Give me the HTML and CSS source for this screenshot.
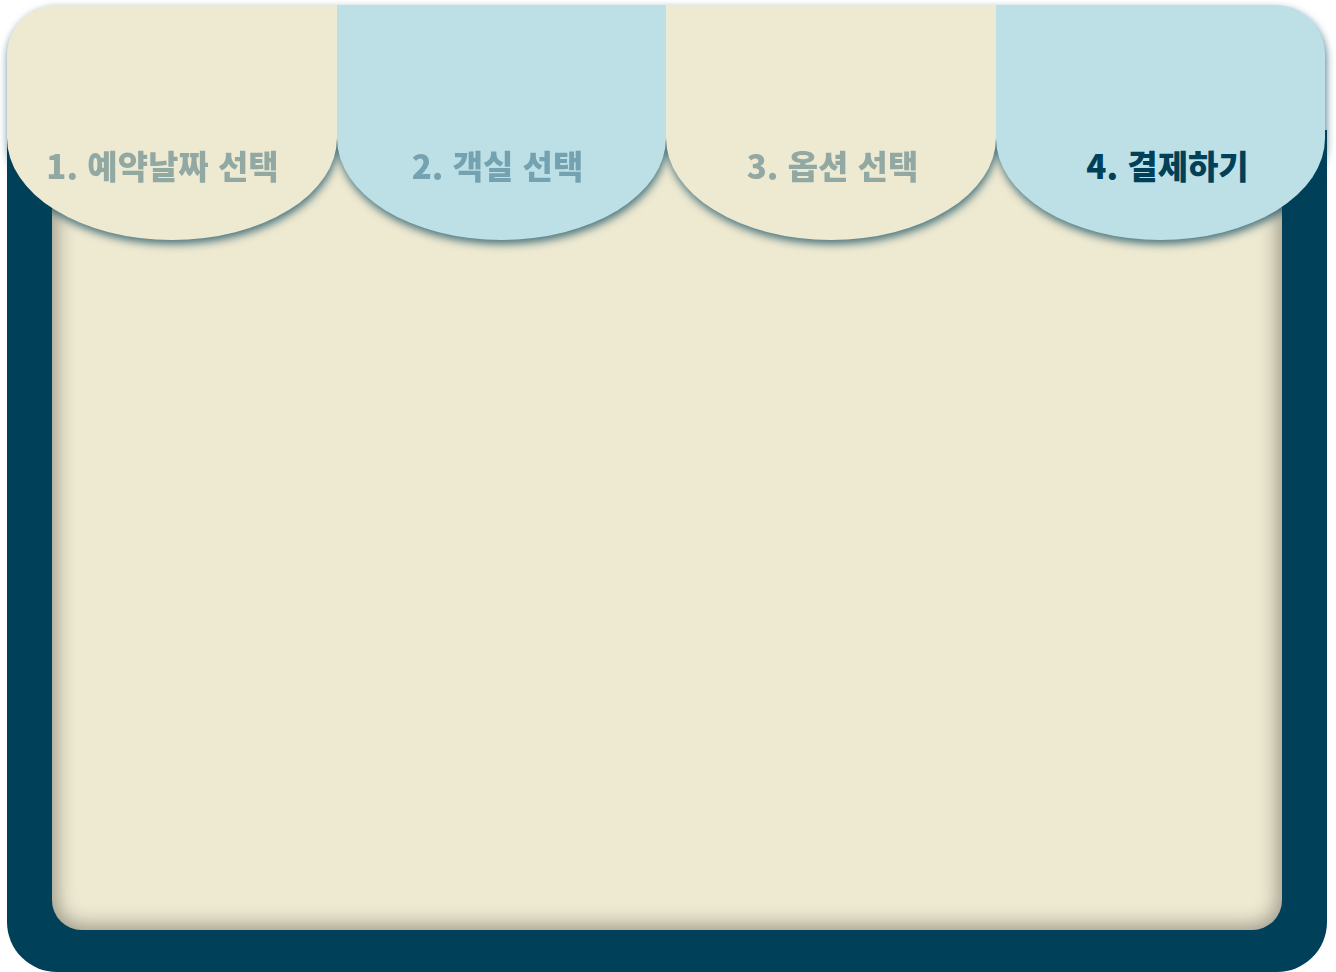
FILE: index.html
```html
<!DOCTYPE html>
<html lang="ko">
<head>
<meta charset="utf-8">
<meta name="viewport" content="width=device-width, initial-scale=1">
<title>예약</title>
<link rel="stylesheet" href="styles.css">
</head>
<body>
<main class="booth">
  <section class="frame" aria-label="결제하기">
    <div class="panel"></div>
  </section>
  <nav class="awning" aria-label="예약 단계">
    <div class="scallops" aria-hidden="true">
      <span class="scallop"></span>
      <span class="scallop blue"></span>
      <span class="scallop"></span>
      <span class="scallop blue"></span>
    </div>
    <ol class="steps">
      <li><button class="step" type="button">1. 예약날짜 선택</button></li>
      <li><button class="step" type="button">2. 객실 선택</button></li>
      <li><button class="step" type="button">3. 옵션 선택</button></li>
      <li><button class="step current" type="button" aria-current="step">4. 결제하기</button></li>
    </ol>
  </nav>
</main>
</body>
</html>
```
FILE: styles.css
```css
:root {
  --navy: #004059;
  --cream: #eee9d1;
  --blue: #bde0e6;
}

* {
  box-sizing: border-box;
}

body {
  margin: 0;
  background: #fff;
  font-family: "Noto Sans CJK KR", sans-serif;
  overflow-x: hidden;
}

.booth {
  display: grid;
  min-height: 100vh;
  padding: 5px 9px 0 7px;
}

.frame {
  grid-area: 1 / 1;
  display: grid;
  margin-top: 125px;
  padding: 0 45px 42px;
  background: var(--navy);
  border-radius: 0 0 50px 50px;
}

.panel {
  background: var(--cream);
  border-radius: 0 0 30px 30px;
  box-shadow: inset 0 0 20px 4px rgba(0, 0, 0, 0.36);
}

.awning {
  grid-area: 1 / 1;
  display: grid;
  align-self: start;
  margin-right: 2px;
}

.scallops {
  grid-area: 1 / 1;
  display: grid;
  grid-template-columns: repeat(4, 1fr);
  filter: drop-shadow(1px 4px 4px rgba(0, 64, 89, 0.7));
}

.scallop {
  height: 235px;
  background: var(--cream);
  border-radius: 0 0 50% 50% / 0 0 102px 102px;
}

.scallop:first-child {
  border-top-left-radius: 50px;
}

.scallop:last-child {
  border-top-right-radius: 50px;
}

.blue {
  background: var(--blue);
}

.steps {
  grid-area: 1 / 1;
  z-index: 1;
  display: grid;
  grid-template-columns: repeat(4, 1fr);
  margin: 0 -10px 0 -12px;
  padding: 136px 0 0;
  list-style: none;
}

.step {
  display: block;
  width: 100%;
  padding: 0;
  border: 0;
  background: none;
  color: var(--navy);
  font: 900 33px/48px "Noto Sans CJK KR", sans-serif;
  text-align: center;
  white-space: nowrap;
  opacity: 0.38;
  cursor: pointer;
}

.current {
  opacity: 1;
}
```
